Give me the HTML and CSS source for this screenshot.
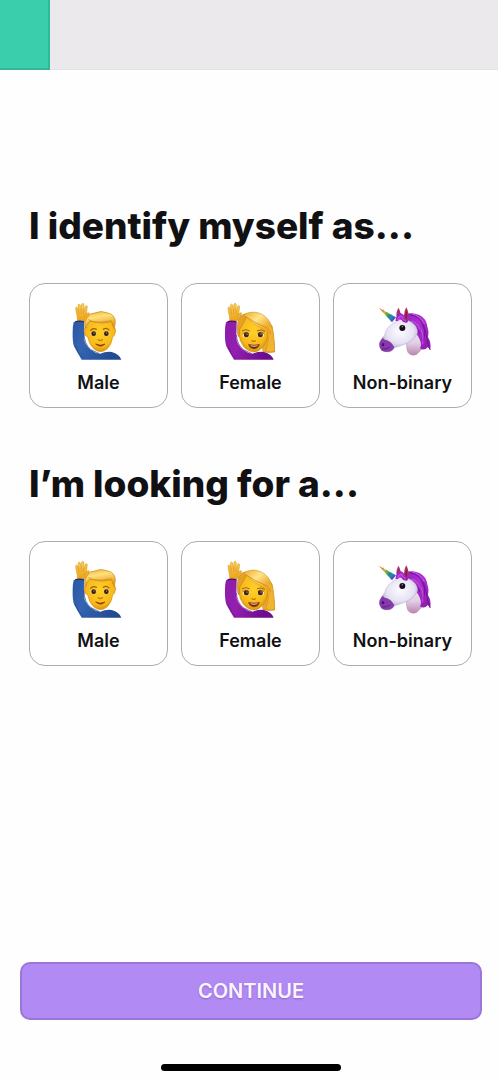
FILE: index.html
```html
<!DOCTYPE html>
<html lang="en">
<head>
<meta charset="utf-8">
<meta name="viewport" content="width=device-width, initial-scale=1">
<title>About you</title>
<link rel="stylesheet" href="styles.css">
</head>
<body>
<svg class="sprite" aria-hidden="true">
  <defs>
    <radialGradient id="skin" cx=".5" cy=".42" r=".62"><stop offset="0" stop-color="#ffd02a"/><stop offset=".7" stop-color="#f8b91a"/><stop offset="1" stop-color="#cf8608"/></radialGradient>
    <linearGradient id="palm" x1="0" y1="0" x2="0" y2="1"><stop offset="0" stop-color="#ffd052"/><stop offset="1" stop-color="#e9a21c"/></linearGradient>
    <linearGradient id="hair" x1="0" y1="0" x2=".3" y2="1"><stop offset="0" stop-color="#f0b02c"/><stop offset=".4" stop-color="#ffe07c"/><stop offset="1" stop-color="#e39a12"/></linearGradient>
    <linearGradient id="locks" x1="80" y1="52" x2="170" y2="160" gradientUnits="userSpaceOnUse"><stop offset="0" stop-color="#efaa26"/><stop offset=".3" stop-color="#ffe48c"/><stop offset=".55" stop-color="#efac2c"/><stop offset="1" stop-color="#f3b62f"/></linearGradient>
    <linearGradient id="blue" x1="0" y1="0" x2="1" y2=".3"><stop offset="0" stop-color="#2a56a0"/><stop offset=".35" stop-color="#3464b2"/><stop offset="1" stop-color="#234b92"/></linearGradient>
    <linearGradient id="violet" x1="0" y1="0" x2="1" y2=".3"><stop offset="0" stop-color="#8a1ca8"/><stop offset=".4" stop-color="#941fb0"/><stop offset="1" stop-color="#6c0d8b"/></linearGradient>
    <linearGradient id="horn" x1="26" y1="38" x2="76" y2="82" gradientUnits="userSpaceOnUse"><stop offset="0" stop-color="#d9604c"/><stop offset=".2" stop-color="#e58f30"/><stop offset=".38" stop-color="#c3bf32"/><stop offset=".55" stop-color="#22a653"/><stop offset=".75" stop-color="#2080d0"/><stop offset="1" stop-color="#6a20b5"/></linearGradient>
    <radialGradient id="coat" cx=".54" cy=".38" r=".6"><stop offset="0" stop-color="#fcfbff"/><stop offset=".6" stop-color="#e6e2f3"/><stop offset="1" stop-color="#a99cc6"/></radialGradient>
    <linearGradient id="neck" x1="0" y1="0" x2="0" y2="1"><stop offset="0" stop-color="#ece5f4"/><stop offset=".5" stop-color="#dfcfe6"/><stop offset="1" stop-color="#bd86ae"/></linearGradient>
    <linearGradient id="mane" x1="0" y1="0" x2="1" y2="1"><stop offset="0" stop-color="#8a20bd"/><stop offset=".45" stop-color="#ac30d0"/><stop offset="1" stop-color="#8b18aa"/></linearGradient>
  </defs>
  <symbol id="hand" viewBox="0 0 198 210">
    <path d="M34 77C36 66 29 53 29 38Q31 33 35 39L38 50L36 30Q39 24 43 30L46 48L47 27Q51 22 54 28L53 49L58 34Q62 29 64 35L61 57Q66 51 70 54Q69 67 56 78Z" fill="url(#palm)" stroke="#d5921c" stroke-width="1.5"/>
    <path d="M38 50L40 58M46 48V57M53 49L52 58M61 57Q56 62 54 68" fill="none" stroke="#d68e15" stroke-width="1.5"/>
  </symbol>
  <symbol id="male" viewBox="0 0 198 210">
    <path d="M23 82Q36 74 55 81L54 128Q55 148 74 164Q88 175 103 176Q119 169 137 171Q160 177 166 194H47Q37 179 24 154Q19 140 20 110Q20 94 23 82Z" fill="url(#blue)"/>
    <path d="M54 113Q54 148 75 164L100 176" fill="none" stroke="#173d80" stroke-width="2"/>
    <path d="M28 153Q35 174 52 191" fill="none" stroke="#234986" stroke-width="2"/>
    <path d="M60 98Q54 97 55 110Q57 125 65 126Q69 149 85 163Q104 177 122 163Q137 150 140 127Q147 122 149 109Q149 97 143 98L139 73Q100 65 64 75Z" fill="url(#skin)" stroke="#c88508" stroke-width="1.5"/>
    <path d="M57 99Q55 75 65 64Q71 55 86 54Q104 45 126 54Q147 58 148 81L145 101L140 91L137 80Q110 89 80 80Q69 76 65 86Q61 90 60 99Z" fill="url(#hair)" stroke="#c88718" stroke-width="2"/>
    <path d="M67 74Q88 85 117 80L137 77" fill="none" stroke="#ca881a" stroke-width="2"/>
    <path d="M74 106Q81 97 91 103M112 103Q121 97 129 105" fill="none" stroke="#9c5c0b" stroke-width="3.5" stroke-linecap="round"/>
    <ellipse cx="82" cy="116" rx="9" ry="7" fill="#f3cf7c"/><ellipse cx="122" cy="116" rx="9" ry="7" fill="#f3cf7c"/>
    <circle cx="83" cy="116" r="7" fill="#36200e"/><circle cx="121" cy="116" r="7" fill="#36200e"/>
    <circle cx="84" cy="114" r="1.5" fill="#eee"/><circle cx="122" cy="114" r="1.5" fill="#eee"/>
    <path d="M97 134Q103 139 109 134" fill="none" stroke="#c47b07" stroke-width="4" stroke-linecap="round"/>
    <path d="M89 147Q103 154 117 147Q104 160 89 147Z" fill="#7e3807" stroke="#7e3807" stroke-width="2"/>
    <use href="#hand" width="198" height="210"/>
    <path d="M28 80Q42 76 55 81" fill="none" stroke="#172f5c" stroke-width="4"/>
  </symbol>
  <symbol id="female" viewBox="4 0 198 210">
    <path d="M130 80L166 92Q169 120 173 147Q173 164 174 171Q155 174 139 170Z" fill="#eaa92c" stroke="#c68b1b" stroke-width="2"/>
    <path d="M28 82Q41 74 60 81L59 128Q60 148 79 164Q93 175 108 176Q124 169 142 171Q165 177 171 194H52Q42 179 29 154Q24 140 25 110Q25 94 28 82Z" fill="url(#violet)"/>
    <path d="M59 120Q61 148 80 164L105 176M34 155Q41 176 58 192" fill="none" stroke="#641080" stroke-width="2"/>
    <path d="M86 62Q65 92 67 121Q69 139 80 154Q96 172 113 171Q134 168 147 143Q157 125 151 100L120 70Z" fill="url(#skin)" stroke="#c88508" stroke-width="1.5"/>
    <path d="M62 110Q59 77 74 62Q81 54 92 58Q84 82 70 101Q66 111 67 126Q62 120 62 110Z" fill="#e5a026" stroke="#b97d15" stroke-width="1.5"/>
    <path d="M81 60Q96 49 120 52Q149 58 163 88Q171 106 172 132Q174 158 173 169Q160 173 147 168Q159 140 153 109Q137 103 118 90Q98 76 81 60Z" fill="url(#locks)" stroke="#c98d1d" stroke-width="1.5"/>
    <path d="M86 64Q113 84 151 99Q159 104 162 117" fill="none" stroke="#d38d1b" stroke-width="2.5"/>
    <path d="M77 107Q87 100 98 107M122 107Q134 101 144 109" fill="none" stroke="#a85f0a" stroke-width="3" stroke-linecap="round"/>
    <ellipse cx="88" cy="119" rx="10" ry="8" fill="#fff1c7"/><ellipse cx="132" cy="119" rx="10" ry="8" fill="#fff1c7"/>
    <circle cx="89" cy="119" r="7.5" fill="#41260e"/><circle cx="131" cy="119" r="7.5" fill="#41260e"/>
    <circle cx="91" cy="117" r="1.7" fill="#fff"/><circle cx="133" cy="117" r="1.7" fill="#fff"/>
    <path d="M78 116Q85 108 97 115M123 115Q136 108 143 117" fill="none" stroke="#583010" stroke-width="2"/>
    <path d="M106 137Q111 141 116 137" fill="none" stroke="#c77806" stroke-width="4" stroke-linecap="round"/>
    <path d="M95 148Q112 152 129 148Q126 161 112 162Q98 161 95 148Z" fill="#6a2815" stroke="#a64a11" stroke-width="1.5"/>
    <path d="M100 151Q112 153 124 151L121 154Q112 156 103 154Z" fill="#f5dfbd"/>
    <use href="#hand" x="5" width="198" height="210"/>
    <path d="M33 80Q47 76 60 81" fill="none" stroke="#4e0767" stroke-width="4"/>
  </symbol>
  <symbol id="unicorn" viewBox="0 0 198 210">
    <path d="M112 132Q106 151 113 171Q121 184 139 179Q151 169 160 156L148 108Z" fill="url(#neck)" stroke="#b98bb9" stroke-width="1.5"/>
    <path d="M103 58Q126 50 148 60Q169 69 173 98Q178 111 174 127Q184 141 181 166L174 156Q162 169 150 160Q158 147 145 125Q132 103 118 91Q99 81 92 75Z" fill="url(#mane)"/>
    <path d="M119 59Q151 65 158 91Q170 109 158 142M119 82Q141 87 149 117M160 88Q168 113 171 130Q172 148 180 164" fill="none" stroke="#73129a" stroke-width="3"/>
    <path d="M125 56Q151 62 164 86M154 103Q162 124 158 148M124 78Q142 82 151 104" fill="none" stroke="#cd62e8" stroke-width="2.5"/>
    <path d="M78 80Q96 64 125 82Q145 96 142 114Q134 134 108 146Q92 153 73 158Q66 174 45 170Q29 167 28 149Q31 132 44 120Q48 94 78 80Z" fill="url(#coat)" stroke="#b5abc9" stroke-width="1.5"/>
    <path d="M34 134Q38 126 44 134Q63 136 73 157Q65 173 45 170Q29 167 28 149Q28 139 34 134Z" fill="#873aab"/>
    <ellipse cx="39" cy="149" rx="4" ry="5" fill="#4a126a"/>
    <path d="M36 162Q49 163 59 157" fill="none" stroke="#5d217b" stroke-width="3"/>
    <path d="M26 38L78 67L66 82Z" fill="url(#horn)"/>
    <path d="M37 48L41 45M46 57L52 51M55 68L63 59M62 78L74 67" stroke="#69557c" stroke-width="2"/>
    <path d="M79 64Q79 48 85 38Q93 48 92 69Z" fill="#a62e69"/>
    <path d="M103 68Q101 50 109 37Q119 54 114 78L105 82Z" fill="#b23264"/>
    <path d="M106 68Q105 55 110 45Q114 60 110 75Z" fill="#812042"/>
    <path d="M76 78Q78 59 91 54Q103 57 107 71Q118 75 111 83Q98 83 95 75Q89 71 84 78Z" fill="url(#mane)"/>
    <path d="M85 75Q84 63 95 64Q98 75 108 78" fill="none" stroke="#d55bed" stroke-width="2.5"/>
    <circle cx="97" cy="99" r="9" fill="#171019"/><circle cx="97" cy="95" r="2" fill="#a7a0ac"/>
  </symbol>
</svg>

<div class="screen">
  <div class="progress" role="progressbar" aria-label="Sign-up progress" aria-valuemin="0" aria-valuemax="100" aria-valuenow="10"><div class="progress-fill"></div></div>
  <main class="form">
    <section class="question" aria-labelledby="identity">
      <h1 class="title" id="identity">I identify myself as...</h1>
      <div class="options">
        <button class="option" type="button"><svg class="icon" aria-hidden="true"><use href="#male"/></svg>Male</button>
        <button class="option" type="button"><svg class="icon" aria-hidden="true"><use href="#female"/></svg>Female</button>
        <button class="option" type="button"><svg class="icon" aria-hidden="true"><use href="#unicorn"/></svg>Non-binary</button>
      </div>
    </section>
    <section class="question" aria-labelledby="preference">
      <h2 class="title" id="preference">I’m looking for a...</h2>
      <div class="options">
        <button class="option" type="button"><svg class="icon" aria-hidden="true"><use href="#male"/></svg>Male</button>
        <button class="option" type="button"><svg class="icon" aria-hidden="true"><use href="#female"/></svg>Female</button>
        <button class="option" type="button"><svg class="icon" aria-hidden="true"><use href="#unicorn"/></svg>Non-binary</button>
      </div>
    </section>
  </main>
  <footer class="footer">
    <button class="continue" type="button">CONTINUE</button>
    <div class="home-indicator"></div>
  </footer>
</div>
</body>
</html>
```

FILE: styles.css
```css
* {
  box-sizing: border-box;
}

body {
  margin: 0;
  background: #fefefe;
  color: #111113;
  font-family: Inter, "Liberation Sans", sans-serif;
}

.sprite {
  position: absolute;
  width: 0;
  height: 0;
}

.screen {
  display: flex;
  flex-direction: column;
  min-height: 100vh;
}

.progress {
  height: 70px;
  background: #ebe9ec;
  border-bottom: 1px solid #e3e1e4;
}

.progress-fill {
  width: 10%;
  height: 70px;
  background: #3bceac;
  border: solid #2dba9b;
  border-width: 0 2px 2px 0;
}

.form {
  display: flex;
  flex: 1;
  flex-direction: column;
  gap: 52px;
  padding: 132px 26px 32px 29px;
}

.title {
  margin: 0 0 33px;
  font-size: 37px;
  font-weight: 800;
  line-height: 48px;
}

.options {
  display: grid;
  grid-template-columns: repeat(3, 1fr);
  gap: 13px;
}

.option {
  display: flex;
  flex-direction: column;
  align-items: center;
  padding: 11px 0 12px;
  border: 1px solid #adadb0;
  border-radius: 16px;
  background: #fff;
  color: inherit;
  font: 600 18px/24px Inter, "Liberation Sans", sans-serif;
  gap: 6px;
}

.icon {
  width: 66px;
  height: 70px;
}

.footer {
  display: flex;
  flex-direction: column;
  align-items: center;
  gap: 44px;
  padding: 0 16px 9px 20px;
}

.continue {
  width: 100%;
  height: 58px;
  border: 2px solid #9a76d8;
  border-radius: 10px;
  background: #b18af4;
  color: #fbf3ff;
  font: 600 20px/24px Inter, "Liberation Sans", sans-serif;
  text-shadow: 0 1px 2px #8d67c8;
}

.home-indicator {
  width: 180px;
  height: 7px;
  border-radius: 4px;
  background: #000;
}
```
